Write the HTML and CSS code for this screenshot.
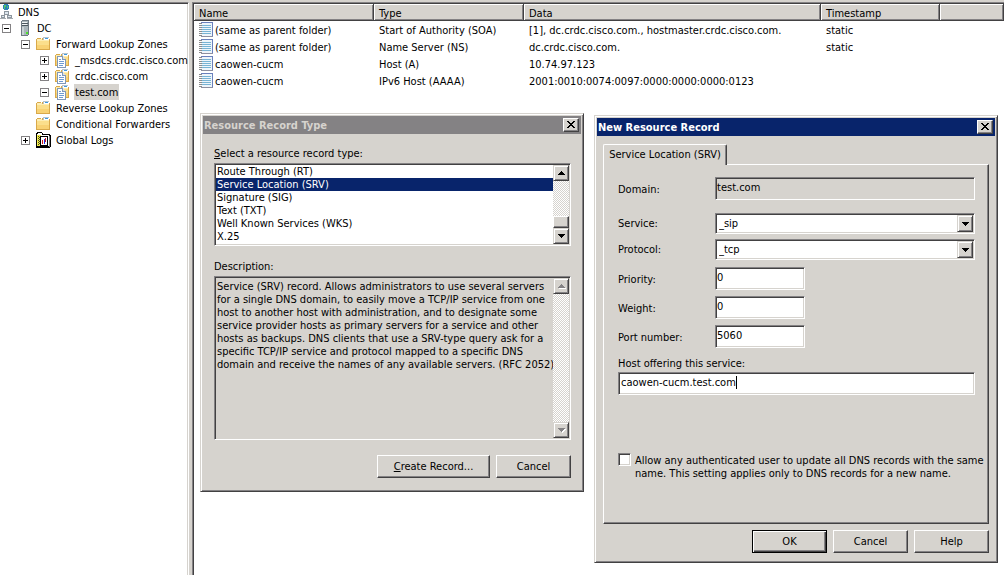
FILE: index.html
```html
<!DOCTYPE html>
<html lang="en">
<head>
<meta charset="utf-8">
<title>DNS Manager</title>
<link rel="stylesheet" href="styles.css">
</head>
<body>
<svg class="defs" aria-hidden="true">
  <symbol id="folder" viewBox="0 0 16 16">
    <path d="M1 3V14H15V3H14V2H7V3H6V2H2V3Z" fill="#d9a94a"/>
    <path d="M2 3H7V4H14V6H2Z" fill="#fdeeb4"/>
    <path d="M2 5H14V13H2Z" fill="#fbdf8c"/>
    <path d="M2 9H14V13H2Z" fill="#f8d274"/>
    <path d="M8 1H14V4H8Z" fill="#b9c4cc"/><path d="M9 2H14V4H9Z" fill="#fff"/><path d="M10 2H13V3H10Z" fill="#3f9be0"/>
  </symbol>
  <symbol id="zone" viewBox="0 0 16 16">
    <use href="#folder"/>
    <path d="M3 4H9V5H10V6H11V7H12V16H3Z" fill="#8098b8"/><path d="M4 5H8V8H11V15H4Z" fill="#fff"/>
    <path d="M9 5V7H11V6H10V5Z" fill="#d3e0ee"/>
    <path d="M5 7H7V8H5ZM5 9H10V10H5ZM5 11H10V12H5ZM5 13H9V14H5Z" fill="#6f9bd0"/>
  </symbol>
  <symbol id="server" viewBox="0 0 16 16">
    <path d="M5 1H6V0H13V15H12V16H5Z" fill="#6d7982"/>
    <path d="M6 1H12V15H6Z" fill="#a9b5ba"/>
    <path d="M6 2H11V3H6ZM6 4H11V5H6Z" fill="#f0f4f5"/>
    <path d="M6 3H12V4H6ZM6 5H12V6H6Z" fill="#4c5860"/><path d="M6 7H8V15H6Z" fill="#c9d2d5"/>
    <path d="M10 12H12V14H10Z" fill="#4be32a"/>
  </symbol>
  <symbol id="network" viewBox="0 0 13 16">
    <circle cx="6" cy="3" r="3" fill="#2d7fb5"/><path d="M4 1H6V3H5V5H4ZM7 2H8V4H7Z" fill="#53c56a"/>
    <path d="M4 7H9V11H4ZM1 11H5V14H1ZM7 11H12V14H7Z" fill="#8d969e"/>
    <path d="M5 8H8V10H5ZM2 12H4V13H2ZM8 12H11V13H8Z" fill="#dce6ee"/>
    <path d="M0 14H6V15H0ZM7 14H13V15H7Z" fill="#a5abb0"/>
  </symbol>
  <symbol id="logs" viewBox="0 0 16 16">
    <path d="M1 1H2V0H7V1H8V2H15V3H16V15H15V16H1Z" fill="#000"/><path d="M2 2H3V1H7V3H14V14H2Z" fill="#fff"/>
    <path d="M2 3H6V14H2Z" fill="#f5ee4a"/>
    <path d="M3 4H4V5H3ZM4 5H5V6H4ZM3 6H4V7H3ZM4 7H5V8H4ZM3 8H4V9H3ZM4 9H5V10H4ZM3 10H4V11H3ZM4 11H5V12H4ZM3 12H4V13H3Z" fill="#4a4a20"/>
    <path d="M5 4H13V14H5Z" fill="#000"/><path d="M6 5H12V13H6Z" fill="#fff"/>
    <path d="M7 8H8V12H7Z" fill="#d01818"/><path d="M9 7H10V12H9Z" fill="#2028e0"/><path d="M10 6H11V10H10Z" fill="#d01818"/>
    <path d="M14 4H15V15H14Z" fill="#848284"/>
  </symbol>
  <symbol id="record" viewBox="0 0 14 16">
    <path d="M2 0H14V15H2Z" fill="#6a80bc"/><path d="M2 1H13V14H2Z" fill="#eef5fa"/>
    <path d="M3 3H12V4H3ZM3 5H12V6H3ZM3 7H12V8H3ZM3 9H12V10H3ZM3 11H12V12H3Z" fill="#78b4d4"/>
    <path d="M2 14H14V15H2Z" fill="#8e90a0"/>
    <path d="M0 1H3V2H0ZM0 3H3V4H0ZM0 5H3V6H0ZM0 7H3V8H0ZM0 9H3V10H0ZM0 11H3V12H0ZM0 13H3V14H0Z" fill="#8b8b8b"/>
  </symbol>
  <symbol id="plus" viewBox="0 0 9 9"><path d="M0 0H9V9H0Z" fill="#848284"/><path d="M1 1H8V8H1Z" fill="#fff"/><path d="M2 4H7V5H2ZM4 2H5V7H4Z"/></symbol>
  <symbol id="minus" viewBox="0 0 9 9"><path d="M0 0H9V9H0Z" fill="#848284"/><path d="M1 1H8V8H1Z" fill="#fff"/><path d="M2 4H7V5H2Z"/></symbol>
  <symbol id="up" viewBox="0 0 7 4"><path d="M3 0H4V1H5V2H6V3H7V4H0V3H1V2H2V1H3Z" fill="currentColor"/></symbol>
  <symbol id="down" viewBox="0 0 7 4"><path d="M0 0H7V1H6V2H5V3H4V4H3V3H2V2H1V1H0Z" fill="currentColor"/></symbol>
  <symbol id="close" viewBox="0 0 8 7"><path d="M0 0H2V1H3V2H5V1H6V0H8V1H7V2H6V3H5V4H6V5H7V6H8V7H6V6H5V5H3V6H2V7H0V6H1V5H2V4H3V3H2V2H1V1H0Z"/></symbol>
</svg>

<div class="console">
  <nav class="tree pane" aria-label="Console tree">
    <ul>
      <li>
        <div class="node root"><svg class="net"><use href="#network"/></svg><span class="name">DNS</span></div>
        <ul>
          <li>
            <div class="node"><svg class="toggle"><use href="#minus"/></svg><svg class="icon"><use href="#server"/></svg><span class="name">DC</span></div>
            <ul class="indent">
              <li>
                <div class="node"><svg class="toggle"><use href="#minus"/></svg><svg class="icon"><use href="#folder"/></svg><span class="name">Forward Lookup Zones</span></div>
                <ul class="indent">
                  <li class="node"><svg class="toggle"><use href="#plus"/></svg><svg class="icon"><use href="#zone"/></svg><span class="name">_msdcs.crdc.cisco.com</span></li>
                  <li class="node"><svg class="toggle"><use href="#plus"/></svg><svg class="icon"><use href="#zone"/></svg><span class="name">crdc.cisco.com</span></li>
                  <li class="node"><svg class="toggle"><use href="#minus"/></svg><svg class="icon"><use href="#zone"/></svg><span class="name selected">test.com</span></li>
                </ul>
              </li>
              <li class="node"><span class="toggle"></span><svg class="icon"><use href="#folder"/></svg><span class="name">Reverse Lookup Zones</span></li>
              <li class="node"><span class="toggle"></span><svg class="icon"><use href="#folder"/></svg><span class="name">Conditional Forwarders</span></li>
              <li class="node"><svg class="toggle"><use href="#plus"/></svg><svg class="icon"><use href="#logs"/></svg><span class="name">Global Logs</span></li>
            </ul>
          </li>
        </ul>
      </li>
    </ul>
  </nav>

  <main class="list pane">
    <table class="records">
      <colgroup><col class="c-name"><col class="c-type"><col class="c-data"><col class="c-time"><col></colgroup>
      <thead><tr><th>Name</th><th>Type</th><th>Data</th><th>Timestamp</th><th></th></tr></thead>
      <tbody>
        <tr><td><div class="rec"><svg><use href="#record"/></svg>(same as parent folder)</div></td><td>Start of Authority (SOA)</td><td>[1], dc.crdc.cisco.com., hostmaster.crdc.cisco.com.</td><td>static</td><td></td></tr>
        <tr><td><div class="rec"><svg><use href="#record"/></svg>(same as parent folder)</div></td><td>Name Server (NS)</td><td>dc.crdc.cisco.com.</td><td>static</td><td></td></tr>
        <tr><td><div class="rec"><svg><use href="#record"/></svg>caowen-cucm</div></td><td>Host (A)</td><td>10.74.97.123</td><td></td><td></td></tr>
        <tr><td><div class="rec"><svg><use href="#record"/></svg>caowen-cucm</div></td><td>IPv6 Host (AAAA)</td><td>2001:0010:0074:0097:0000:0000:0000:0123</td><td></td><td></td></tr>
      </tbody>
    </table>
  </main>
</div>

<section class="window type-window" role="dialog" aria-labelledby="type-title">
  <header class="titlebar inactive"><h2 id="type-title">Resource Record Type</h2><button class="close" aria-label="Close"><svg><use href="#close"/></svg></button></header>
  <div class="type-body">
    <label for="rtype"><u>S</u>elect a resource record type:</label>
    <div class="sunken listbox">
      <select id="rtype" size="6">
        <option>Route Through (RT)</option>
        <option selected>Service Location (SRV)</option>
        <option>Signature (SIG)</option>
        <option>Text (TXT)</option>
        <option>Well Known Services (WKS)</option>
        <option>X.25</option>
      </select>
      <div class="scroll">
        <button class="arrow" aria-label="Scroll up"><svg><use href="#up"/></svg></button>
        <span class="thumb"></span>
        <button class="arrow" aria-label="Scroll down"><svg><use href="#down"/></svg></button>
      </div>
    </div>
    <label for="desc" class="desc-label">Description:</label>
    <div class="sunken description">
      <textarea id="desc" readonly>Service (SRV) record. Allows administrators to use several servers
for a single DNS domain, to easily move a TCP/IP service from one
host to another host with administration, and to designate some
service provider hosts as primary servers for a service and other
hosts as backups. DNS clients that use a SRV-type query ask for a
specific TCP/IP service and protocol mapped to a specific DNS
domain and receive the names of any available servers. (RFC 2052)</textarea>
      <div class="scroll">
        <button class="arrow" disabled aria-label="Scroll description up"><svg><use href="#up"/></svg></button>
        <button class="arrow" disabled aria-label="Scroll description down"><svg><use href="#down"/></svg></button>
      </div>
    </div>
    <footer class="actions"><button class="push wide"><span><u>C</u>reate Record...</span></button><button class="push">Cancel</button></footer>
  </div>
</section>

<section class="window record-window" role="dialog" aria-labelledby="rec-title">
  <header class="titlebar"><h2 id="rec-title">New Resource Record</h2><button class="close" aria-label="Close"><svg><use href="#close"/></svg></button></header>
  <form class="record-body">
    <div role="tablist"><button type="button" class="tab" role="tab" aria-selected="true">Service Location (SRV)</button></div>
    <div class="panel" role="tabpanel">
      <div class="field domain"><label for="domain">Domain:</label><input class="sunken" id="domain" type="text" value="test.com" readonly></div>
      <div class="field"><label for="service">Service:</label><span class="sunken combo"><select id="service"><option>_sip</option></select><span class="arrow"><svg><use href="#down"/></svg></span></span></div>
      <div class="field protocol"><label for="protocol">Protocol:</label><span class="sunken combo"><select id="protocol"><option>_tcp</option></select><span class="arrow"><svg><use href="#down"/></svg></span></span></div>
      <div class="field short"><label for="priority">Priority:</label><input class="sunken" id="priority" type="text" value="0"></div>
      <div class="field short"><label for="weight">Weight:</label><input class="sunken" id="weight" type="text" value="0"></div>
      <div class="field short"><label for="port">Port number:</label><input class="sunken" id="port" type="text" value="5060"></div>
      <label class="host-label" for="host">Host offering this service:</label>
      <div class="sunken host"><input id="host" type="text" value="caowen-cucm.test.com"><span class="caret"></span></div>
      <div class="allow"><input type="checkbox" class="sunken" id="allow"><label for="allow">Allow any authenticated user to update all DNS records with the same<br>name. This setting applies only to DNS records for a new name.</label></div>
    </div>
    <footer class="actions"><button type="button" class="push default">OK</button><button type="button" class="push">Cancel</button><button type="button" class="push">Help</button></footer>
  </form>
</section>
</body>
</html>
```
FILE: styles.css
```css
:root {
  --face: #d6d3ce;
  --shadow: #848284;
  --dark: #424142;
  --navy: #08246b;
}
* { box-sizing: border-box; }
body, button, input, select, textarea {
  font: 11px/13px "DejaVu Sans Condensed", Tahoma, "Noto Sans", sans-serif;
  color: #000;
}
body { margin: 0; height: 100vh; overflow: hidden; background: #fff; }
svg { display: block; flex: none; shape-rendering: crispEdges; }
.defs { position: absolute; width: 0; height: 0; }
ul { list-style: none; margin: 0; padding: 0; }
button, input, select, textarea { margin: 0; padding: 0; border: 0; border-radius: 0; outline: 0; appearance: none; }

/* console */
.console {
  display: grid;
  grid-template-columns: 189px 1fr;
  gap: 3px;
  height: 100%;
  padding-top: 2px;
  background: var(--face);
}
.pane { min-width: 0; overflow: hidden; background: #fff; border-top: 1px solid var(--shadow); box-shadow: inset 0 1px var(--dark); padding-top: 1px; }
.tree { border-right: 1px solid #fff; box-shadow: inset 0 1px var(--dark), inset -1px 0 var(--face); }
.list { border-left: 1px solid var(--shadow); box-shadow: inset 1px 1px var(--dark); padding-left: 1px; }
.node { display: flex; align-items: center; height: 16px; padding-left: 2px; gap: 4px; white-space: nowrap; }
.root { padding-left: 0; }
.net { width: 13px; height: 16px; }
.toggle { display: block; flex: none; width: 9px; height: 9px; margin: 1px 1px 0 0; }
.icon { width: 16px; height: 16px; }
.name { padding: 2px 1px 0; line-height: 14px; }
.selected { background: var(--face); }
.indent { padding-left: 19px; }

.records { width: 100%; table-layout: fixed; border-collapse: separate; border-spacing: 0; }
.c-name { width: 180px; }
.c-type { width: 150px; }
.c-data { width: 297px; }
.c-time { width: 119px; }
.records th {
  height: 17px;
  padding: 2px 5px 0;
  font-weight: normal;
  text-align: left;
  background: var(--face);
  border: solid;
  border-width: 0 1px 1px 0;
  border-color: var(--dark);
  box-shadow: inset 1px 1px #fff, inset -1px -1px var(--shadow);
}
.records td { height: 17px; padding: 2px 5px 0; white-space: nowrap; }
.records td:first-child { padding-top: 0; }
.rec { display: flex; align-items: flex-end; gap: 2px; height: 17px; line-height: 15px; }
.rec svg { width: 14px; height: 16px; }

/* windows */
.window {
  position: absolute;
  background: var(--face);
  border: 1px solid;
  border-color: var(--face) var(--dark) var(--dark) var(--face);
  box-shadow: inset 1px 1px #fff, inset -1px -1px var(--shadow);
  padding: 2px;
}
.type-window { left: 200px; top: 113px; width: 384px; }
.record-window { left: 594px; top: 115px; width: 404px; }
.titlebar { display: flex; align-items: center; height: 18px; padding: 0 2px 0 1px; background: var(--navy); color: #fff; }
.titlebar.inactive { background: var(--shadow); color: var(--face); }
.titlebar h2 { flex: 1; margin: 0; padding-top: 2px; font-size: 11px; line-height: 16px; }
.close, .arrow, .push, .thumb {
  display: flex;
  align-items: center;
  justify-content: center;
  background: var(--face);
  border: 1px solid;
  border-color: #fff var(--dark) var(--dark) #fff;
  box-shadow: inset -1px -1px var(--shadow);
}
.close { width: 16px; height: 14px; padding-right: 1px; padding-bottom: 1px; }
.close svg { width: 8px; height: 7px; }
.sunken {
  background: #fff;
  border: 1px solid;
  border-color: var(--shadow) #fff #fff var(--shadow);
  box-shadow: inset 1px 1px var(--dark), inset -1px -1px var(--face);
  padding: 1px;
}
.push { width: 75px; height: 23px; }
.wide { width: 113px; }
.default { border-color: #000; box-shadow: inset 1px 1px #fff, inset -1px -1px var(--dark), inset -2px -2px var(--shadow); }
.actions { display: flex; justify-content: flex-end; gap: 6px; }

.type-body { display: flex; flex-direction: column; padding: 13px 10px 11px 11px; }
.listbox { display: flex; margin-top: 3px; height: 83px; }
.listbox select { flex: 1; height: 79px; overflow: hidden; background: #fff; scrollbar-width: none; }
.listbox option { padding: 0 1px; min-height: 13px; color: #000; }
.listbox option:checked { background: linear-gradient(var(--navy), var(--navy)); color: #fff; }
.scroll {
  display: flex;
  flex: none;
  flex-direction: column;
  justify-content: space-between;
  width: 16px;
  background: repeating-conic-gradient(#fff 0 25%, var(--face) 0 50%) 0 0 / 2px 2px;
}
.arrow { width: 16px; height: 16px; border-color: var(--face) var(--dark) var(--dark) var(--face); box-shadow: inset 1px 1px #fff, inset -1px -1px var(--shadow); }
.arrow svg { width: 7px; height: 4px; }
.arrow:disabled { color: var(--shadow); }
.arrow:disabled svg { filter: drop-shadow(1px 1px 0 #fff); }
.thumb { height: 12px; margin-top: auto; }
.desc-label { margin-top: 14px; }
.description { display: flex; margin-top: 3px; height: 164px; background: var(--face); }
.description textarea { flex: 1; min-width: 0; padding: 2px 0 0 1px; background: transparent; resize: none; overflow: hidden; white-space: pre; }
.type-body .actions { margin-top: 15px; }

.record-body { display: flex; flex-direction: column; padding: 8px 6px 7px; }
.tab {
  position: relative;
  display: block;
  width: 124px;
  height: 21px;
  margin-bottom: -1px;
  padding-bottom: 1px;
  text-align: center;
  background: var(--face);
  border: solid;
  border-width: 1px 1px 0;
  border-color: #fff var(--dark) #fff #fff;
  border-radius: 2px 2px 0 0;
  box-shadow: inset -1px 0 var(--shadow);
}
.panel {
  display: flex;
  flex-direction: column;
  padding: 12px 13px 43px 14px;
  border: 1px solid;
  border-color: #fff var(--dark) var(--dark) #fff;
  box-shadow: inset -1px -1px var(--shadow);
}
.field { display: grid; grid-template-columns: 97px 1fr; align-items: center; height: 21px; }
.domain label, .short label { padding-top: 1px; }
.field input { height: 23px; width: 100%; padding: 0 1px 3px; }
.domain { height: 23px; margin-bottom: 13px; }
.domain input { background: var(--face); box-shadow: inset 1px 1px var(--dark); }
.protocol { margin: 5px 0 7px; }
.short { grid-template-columns: 97px 90px; height: 23px; margin-bottom: 6px; }
.combo { position: relative; display: block; height: 21px; }
.combo select { width: 100%; height: 17px; padding: 0 18px 0 2px; background: #fff; }
.combo .arrow { position: absolute; top: 1px; right: 1px; height: 17px; pointer-events: none; }
.host-label { margin: 3px 0 2px; }
.host { display: flex; align-items: flex-start; height: 23px; }
.host input { field-sizing: content; height: 17px; padding-left: 1px; }
.caret { width: 1px; height: 13px; margin-top: 2px; background: #000; }
.allow { display: flex; align-items: flex-start; gap: 4px; margin-top: 58px; white-space: nowrap; }
.allow input { flex: none; width: 13px; height: 13px; }
.allow label { padding-top: 1px; }
.record-body .actions { margin-top: 6px; }
```
